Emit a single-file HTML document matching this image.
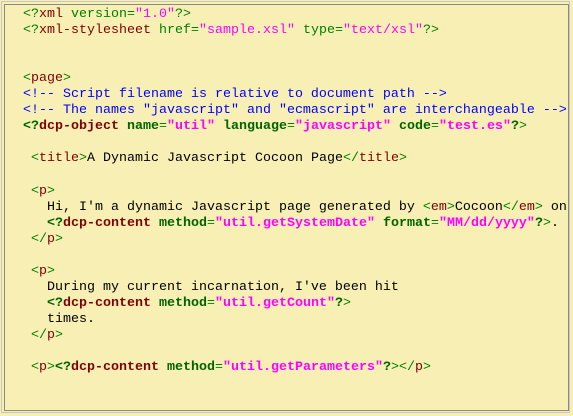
<!DOCTYPE html>
<html><head><style>
html,body{margin:0;padding:0;background:#f7efb4;width:573px;height:416px;overflow:hidden}
.o{position:absolute;left:1px;top:1px;width:569px;height:412px;border:1px solid #c8c6c0;box-sizing:border-box}
.i{position:absolute;left:4px;top:4px;width:565px;height:407px;border:1px solid #8a8a8a;box-sizing:border-box}
pre{position:absolute;left:23px;top:7px;margin:0;font-family:"Liberation Mono",monospace;font-size:13.33px;line-height:16.05px;color:#000}
.g{color:#008000}.G{color:#006400;font-weight:bold}.r{color:#800000}.R{color:#800000;font-weight:bold}.m{color:#ff00ff}.M{color:#ff00ff;font-weight:bold}.b{color:#0000ff}
</style></head><body>
<div class="o"></div><div class="i"></div>
<pre><span class="g">&lt;?</span><span class="r">xml</span> <span class="g">version=</span><span class="m">"1.0"</span><span class="g">?&gt;</span>
<span class="g">&lt;?</span><span class="r">xml-stylesheet</span> <span class="g">href=</span><span class="m">"sample.xsl"</span> <span class="g">type=</span><span class="m">"text/xsl"</span><span class="g">?&gt;</span>


<span class="g">&lt;</span><span class="r">page</span><span class="g">&gt;</span>
<span class="b">&lt;!-- Script filename is relative to document path --&gt;</span>
<span class="b">&lt;!-- The names "javascript" and "ecmascript" are interchangeable --&gt;</span>
<span class="G">&lt;?</span><span class="R">dcp-object</span> <span class="G">name</span><span class="g">=</span><span class="M">"util"</span> <span class="G">language</span><span class="g">=</span><span class="M">"javascript"</span> <span class="G">code</span><span class="g">=</span><span class="M">"test.es"</span><span class="G">?</span><span class="g">&gt;</span>

 <span class="g">&lt;</span><span class="r">title</span><span class="g">&gt;</span>A Dynamic Javascript Cocoon Page<span class="g">&lt;/</span><span class="r">title</span><span class="g">&gt;</span>

 <span class="g">&lt;</span><span class="r">p</span><span class="g">&gt;</span>
   Hi, I'm a dynamic Javascript page generated by <span class="g">&lt;</span><span class="r">em</span><span class="g">&gt;</span>Cocoon<span class="g">&lt;/</span><span class="r">em</span><span class="g">&gt;</span> on
   <span class="G">&lt;?</span><span class="R">dcp-content</span> <span class="G">method</span><span class="g">=</span><span class="M">"util.getSystemDate"</span> <span class="G">format</span><span class="g">=</span><span class="M">"MM/dd/yyyy"</span><span class="G">?</span><span class="g">&gt;</span>.
 <span class="g">&lt;/</span><span class="r">p</span><span class="g">&gt;</span>

 <span class="g">&lt;</span><span class="r">p</span><span class="g">&gt;</span>
   During my current incarnation, I've been hit
   <span class="G">&lt;?</span><span class="R">dcp-content</span> <span class="G">method</span><span class="g">=</span><span class="M">"util.getCount"</span><span class="G">?</span><span class="g">&gt;</span>
   times.
 <span class="g">&lt;/</span><span class="r">p</span><span class="g">&gt;</span>

 <span class="g">&lt;</span><span class="r">p</span><span class="g">&gt;</span><span class="G">&lt;?</span><span class="R">dcp-content</span> <span class="G">method</span><span class="g">=</span><span class="M">"util.getParameters"</span><span class="G">?</span><span class="g">&gt;&lt;/</span><span class="r">p</span><span class="g">&gt;</span></pre>
</body></html>
